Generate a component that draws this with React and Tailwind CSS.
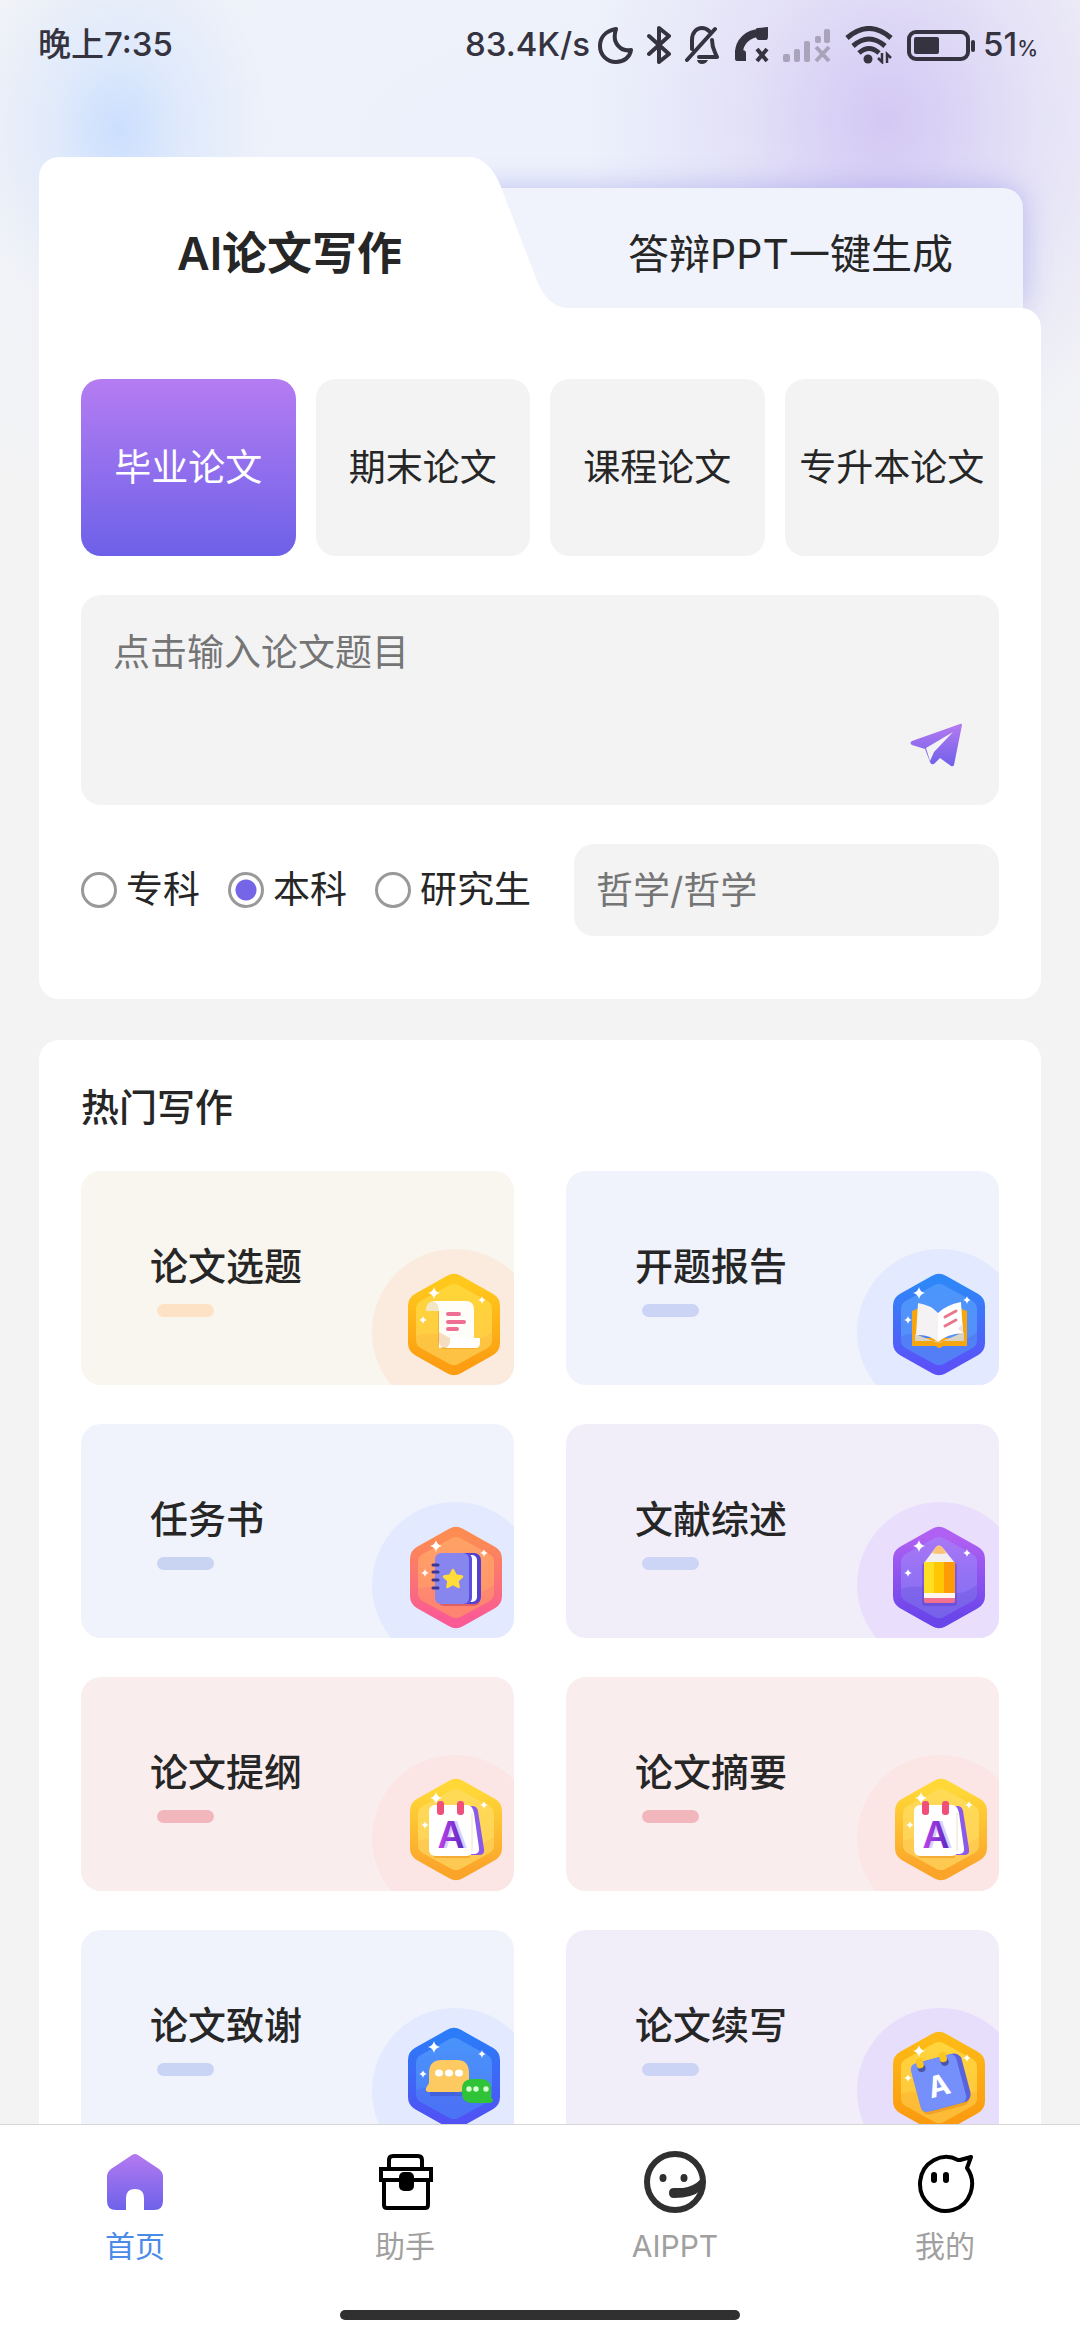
import { useState } from "react";

const paperTypes = ["毕业论文", "期末论文", "课程论文", "专升本论文"];
const degrees = ["专科", "本科", "研究生"];

const HEX_OUTER = "M46 14 78 32V69L46 87 14 69V32Z";
const HEX_INNER = "M46 19 75 35V66L46 82 17 66V35Z";
const SPARK = "M0-6Q1-1 6 0 1 1 0 6-1 1-6 0-1-1 0-6Z";

const Badge = ({ id, outer, inner, wave, dx = 0, dy = 0, children }) => (
  <svg
    className="absolute right-[14px] bottom-[10px] h-[101px] w-[92px] overflow-visible"
    viewBox="0 0 92 101"
    aria-hidden="true"
  >
    <defs>
      <linearGradient id={`${id}-o`} gradientUnits="userSpaceOnUse" x1="0" y1="0" x2="0" y2="101">
        <stop offset="0.1" stopColor={outer[0]} />
        <stop offset="0.9" stopColor={outer[1]} />
      </linearGradient>
      <linearGradient id={`${id}-i`} gradientUnits="userSpaceOnUse" x1="0" y1="10" x2="0" y2="92">
        <stop offset="0" stopColor={inner[0]} />
        <stop offset="1" stopColor={inner[1]} />
      </linearGradient>
    </defs>
    <g transform={`translate(${dx} ${dy})`}>
      <path d={HEX_OUTER} fill={`url(#${id}-o)`} stroke={`url(#${id}-o)`} strokeWidth="28" strokeLinejoin="round" />
      <path d={HEX_INNER} fill={`url(#${id}-i)`} stroke={`url(#${id}-i)`} strokeWidth="18" strokeLinejoin="round" />
      <path
        d="M8 62Q22 56 44 64T84 58V66Q84 71 79 74L50 90Q46 92 42 90L13 74Q8 71 8 66Z"
        fill={wave}
        opacity="0.3"
      />
      <g fill="#fff">
        <path d={SPARK} transform="translate(26 19)" />
        <path d={SPARK} transform="translate(74 26) scale(.65)" />
        <path d={SPARK} transform="translate(15 46) scale(.65)" />
      </g>
      {children}
    </g>
  </svg>
);

const ScrollBadge = () => (
  <Badge id="scroll" outer={["#ffc81c", "#fc9d12"]} inner={["#ffd636", "#ffc94a"]} wave="#f9b13c">
    <path d="M30 30V68Q30 75 37 75H68V72H38Z" fill="#e8951c" opacity="0.5" />
    <path d="M18 37Q18 27 26 27H36V37Z" fill="#f3e6c4" />
    <path d="M25 27H58Q66 27 66 36V66H38Q38 74 31 74V38Q31 29 25 27Z" fill="#fffdf8" />
    <path d="M31 58V66Q31 74 39 74H42V64Z" fill="#f6dcc0" />
    <path d="M42 64H72V69Q72 74 67 74H38Q43 71 42 64Z" fill="#fff" />
    <path d="M40 40H51M40 48H56M40 55H49" stroke="#ee6f92" strokeWidth="4" strokeLinecap="round" />
  </Badge>
);

const BookBadge = () => (
  <Badge id="book" outer={["#2f86f8", "#5a52f8"]} inner={["#4b97fb", "#5a8bf8"]} wave="#4a5ff0">
    <path d="M19 37 26 34V64H66V34L74 37V72H50Q46 76 43 72H19Z" fill="#f7a60f" />
    <path d="M22 60 45 69 71 58V67H50Q46 71 43 67H22Z" fill="#d8d3c4" />
    <path d="M25 29Q38 31 45 39V68Q36 60 23 61Z" fill="#f4f2f2" />
    <path d="M68 28Q53 31 45 39V68Q54 60 70 59Z" fill="#fff" />
    <path d="M52 43 63 37M52 52 63 46" stroke="#e8788a" strokeWidth="3" strokeLinecap="round" />
    <path d="M65 55 70 49V59Z" fill="#e8e4ea" />
  </Badge>
);

const NotebookBadge = () => (
  <Badge id="note" dx={2} outer={["#fd8c52", "#fa5b94"]} inner={["#ffa264", "#ff8f70"]} wave="#fc6a7c">
    <rect x="28" y="28" width="42" height="51" rx="6" fill="#c2385e" opacity="0.5" />
    <rect x="40" y="26" width="31" height="51" rx="7" fill="#5240cf" />
    <rect x="42" y="28" width="25" height="47" rx="5" fill="#fff" />
    <rect x="36" y="26" width="26" height="51" rx="6" fill="#5c4fdd" />
    <rect x="25" y="26" width="34" height="51" rx="6" fill="#8785ee" />
    <path d="M23 38H28M23 45H28M23 53H28M23 61H28" stroke="#3c3696" strokeWidth="3" strokeLinecap="round" />
    <path
      d="m43 43 2.800 5.600 6.200.9-4.500 4.300 1.100 6.200L43 57l-5.600 3 1.100-6.200-4.500-4.300 6.200-.9Z"
      fill="#ffdc38"
      stroke="#ffdc38"
      strokeWidth="2.500"
      strokeLinejoin="round"
    />
  </Badge>
);

const PencilBadge = () => (
  <Badge id="pencil" outer={["#b060f2", "#6a45ea"]} inner={["#a877f6", "#7e6cf2"]} wave="#5f4bd8">
    <rect x="29" y="36" width="35" height="43" rx="3" fill="#5a38c4" opacity="0.4" />
    <path d="M31 36 43 20Q46 17 49 20L62 36Z" fill="#f3efef" />
    <path d="M39 26 43 20Q46 17 49 20L54 26Q46 28 39 26Z" fill="#fbc377" />
    <path d="M31 35H42V67H31Z" fill="#ffdf22" />
    <path d="M41 35H52V67H41Z" fill="#ffc605" />
    <path d="M51 35H62V67H51Z" fill="#ff9b06" />
    <path d="M31 66H62V71H31Z" fill="#fff6ee" />
    <path d="M31 71H62V74Q62 76 60 76H33Q31 76 31 74Z" fill="#f2708f" />
  </Badge>
);

const CalendarBadge = ({ id }) => (
  <Badge id={id} dx={2} dy={-1} outer={["#ffd838", "#fba42a"]} inner={["#ffdb55", "#ffd05a"]} wave="#fbb63e">
    <defs>
      <linearGradient id={`${id}-a`} x1="0" y1="0" x2="1" y2="0">
        <stop offset="0" stopColor="#c043e8" />
        <stop offset="1" stopColor="#5628c4" />
      </linearGradient>
    </defs>
    <path d="M22 70H60V79H26Q22 79 22 70Z" fill="#e8901c" opacity="0.5" />
    <path d="M52 27H62Q67 27 68 32L74 70Q75 76 69 76H58Z" fill="#8a5bea" />
    <path d="M50 28H59Q63 29 64 34L69 69Q70 74 65 75H52Z" fill="#fff" />
    <rect x="19" y="26" width="44" height="51" rx="6" fill="#fff" />
    <path d="M62 34V72" stroke="#f4dfc4" strokeWidth="1" />
    <rect x="27" y="22" width="7" height="14" rx="3" fill="#ef4f78" />
    <rect x="47" y="22" width="7" height="14" rx="3" fill="#ef4f78" />
    <text x="44" y="69" textAnchor="middle" className="font-[Inter] text-[37px] font-semibold" fill="#dccdfa">A</text>
    <text x="41" y="69" textAnchor="middle" className="font-[Inter] text-[37px] font-semibold" fill={`url(#${id}-a)`}>A</text>
  </Badge>
);

const ChatBadge = () => (
  <Badge id="chat" dy={-5} outer={["#2c7bf8", "#5052f4"]} inner={["#4a93fb", "#4c7cf8"]} wave="#4b58ee">
    <path d="M22 64H58V68H22Z" fill="#3445b8" opacity="0.4" />
    <path d="M34 32H49Q61 32 61 45V52Q61 64 50 64H21Q17 64 18 60L21 55V45Q21 32 34 32Z" fill="#fdc961" />
    <g fill="#fff">
      <ellipse cx="31" cy="45" rx="4" ry="3.500" />
      <ellipse cx="41" cy="45" rx="4" ry="3.500" />
      <ellipse cx="51" cy="45" rx="4" ry="3.500" />
    </g>
    <path d="M65 51H73Q83 51 83 61V69L85 72Q85 75 81 75H65Q54 75 54 65V61Q54 51 65 51Z" fill="#2fc437" />
    <g fill="#d9ffd2">
      <circle cx="61" cy="61" r="2.700" />
      <circle cx="68" cy="61" r="2.700" />
      <circle cx="78" cy="61" r="2.700" />
    </g>
  </Badge>
);

const BlueCalendarBadge = () => (
  <Badge id="bluecal" dy={-1} outer={["#fdb916", "#fb9a10"]} inner={["#ffd53c", "#ffc23c"]} wave="#f9a72a">
    <g transform="rotate(-15 46 51)">
      <rect x="22" y="29" width="50" height="50" rx="8" fill="#e08a18" opacity="0.5" />
      <rect x="25" y="26" width="49" height="50" rx="8" fill="#5a62dc" />
      <rect x="22" y="26" width="47" height="50" rx="6" fill="#7590fb" />
      <circle cx="33" cy="32" r="4" fill="#4c55a8" />
      <circle cx="57" cy="32" r="4" fill="#4c55a8" />
      <rect x="29" y="22" width="7" height="10" rx="3" fill="#fcc61e" />
      <rect x="53" y="22" width="7" height="10" rx="3" fill="#fcc61e" />
      <text x="45" y="64" textAnchor="middle" className="font-[Inter] text-[29px] font-bold" fill="#fff">A</text>
    </g>
  </Badge>
);

const hotItems = [
  { title: "论文选题", card: "bg-[#f9f5ef]", glow: "bg-[#faebde]", bar: "bg-[#fde2c6]", icon: <ScrollBadge /> },
  { title: "开题报告", card: "bg-[#f0f3fb]", glow: "bg-[#e3e9fe]", bar: "bg-[#ccd4f5]", icon: <BookBadge /> },
  { title: "任务书", card: "bg-[#f0f3fb]", glow: "bg-[#e3e9fe]", bar: "bg-[#c9d4f2]", icon: <NotebookBadge /> },
  { title: "文献综述", card: "bg-[#f1eef9]", glow: "bg-[#e9dffd]", bar: "bg-[#ccd5f5]", icon: <PencilBadge /> },
  { title: "论文提纲", card: "bg-[#faedee]", glow: "bg-[#fbe5e5]", bar: "bg-[#f2b7bc]", icon: <CalendarBadge id="outline" /> },
  { title: "论文摘要", card: "bg-[#faedee]", glow: "bg-[#fbe5e5]", bar: "bg-[#f2b7bc]", icon: <CalendarBadge id="abstract" /> },
  { title: "论文致谢", card: "bg-[#f0f3fb]", glow: "bg-[#e3e9fe]", bar: "bg-[#c9d4f5]", icon: <ChatBadge /> },
  { title: "论文续写", card: "bg-[#f1eef9]", glow: "bg-[#e7defc]", bar: "bg-[#ccd4f5]", icon: <BlueCalendarBadge /> },
];

const HomeIcon = () => (
  <svg className="size-16" viewBox="0 0 64 64" aria-hidden="true">
    <defs>
      <linearGradient id="home" x1="0" y1="0" x2="0" y2="1">
        <stop offset="0" stopColor="#b57af0" />
        <stop offset="1" stopColor="#6d62ea" />
      </linearGradient>
    </defs>
    <path
      d="M29 5Q32 3 35 5L56 19Q60 22 60 27V51Q60 60 51 60H41V48Q41 39 32 39T23 48V60H13Q4 60 4 51V27Q4 22 8 19Z"
      fill="url(#home)"
    />
  </svg>
);

const ToolboxIcon = () => (
  <svg className="size-16" viewBox="0 0 64 64" fill="none" stroke="#000" strokeWidth="4" aria-hidden="true">
    <path d="M16 18V10Q16 6 20 6H45Q49 6 49 10V18M8 19H58V30H8Z" />
    <path d="M11 30V55Q11 58 14 58H52Q55 58 55 55V30" />
    <rect x="26" y="22" width="15" height="19" rx="5" fill="#000" stroke="none" />
  </svg>
);

const HeadsetIcon = () => (
  <svg className="size-16" viewBox="0 0 64 64" fill="none" stroke="#303030" aria-hidden="true">
    <circle cx="32" cy="32" r="28" strokeWidth="6" />
    <g fill="#303030" stroke="none">
      <ellipse cx="20" cy="28" rx="3.500" ry="4" />
      <ellipse cx="41" cy="28" rx="3.500" ry="4" />
      <path d="M31 38H40Q50 37 58 29V40Q50 48 31 48Q26 48 26 43T31 38Z" />
    </g>
  </svg>
);

const GhostIcon = () => (
  <svg className="size-16" viewBox="0 0 64 64" fill="none" stroke="#000" strokeWidth="4" strokeLinejoin="round" aria-hidden="true">
    <path d="M45 10A26 27 0 1 0 54 18L58 7 47 10Z" fill="#fff" />
    <rect x="18" y="22" width="6" height="11" rx="3" fill="#000" stroke="none" />
    <rect x="30" y="22" width="6" height="11" rx="3" fill="#000" stroke="none" />
  </svg>
);

const navItems = [
  { label: "首页", icon: <HomeIcon />, active: true },
  { label: "助手", icon: <ToolboxIcon /> },
  { label: "AIPPT", icon: <HeadsetIcon /> },
  { label: "我的", icon: <GhostIcon /> },
];

const StatusBar = () => (
  <header className="flex h-[90px] items-center justify-between pr-[42px] pl-[38px] text-[33px] font-medium text-[#35333f]">
    <span>晚上7:35</span>
    <div className="flex items-center gap-[14px]">
      <div className="flex items-center gap-2">
        <span>83.4K/s</span>
        <svg className="h-[38px] w-[35px]" viewBox="0 0 35 38" fill="none" stroke="currentColor" strokeWidth="4" strokeLinejoin="round">
          <path d="M18 3C7 5 2 12 2 20C2 29 9 36 18 36C26 36 32 31 33 24C24 26 13 18 18 3Z" />
        </svg>
      </div>
      <svg className="h-[38px] w-6" viewBox="0 0 24 38" fill="none" stroke="currentColor" strokeWidth="4" strokeLinejoin="round" strokeLinecap="round">
        <path d="M2 10 22 28 12 36V2L22 10 2 28" />
      </svg>
      <svg className="h-[38px] w-[35px]" viewBox="0 0 35 38" fill="none" stroke="currentColor" strokeWidth="4" strokeLinejoin="round" strokeLinecap="round">
        <path d="M30 3 2 34M7 23V14C7 6 12 2 17 2Q21 2 24 5M27 14C27 22 29 24 32 31H14" />
        <path d="M12 34H23Q21 38 17 38T12 34Z" fill="currentColor" stroke="none" />
      </svg>
      <svg className="h-[38px] w-[35px]" viewBox="0 0 35 38" fill="none" stroke="currentColor">
        <path d="M5 27C5 16 14 7 26 7" strokeWidth="8" />
        <path d="M22 3Q22 2 24 2L34 1V10Q34 14 32 14H25Q22 14 22 10ZM1 24H8Q12 24 12 27V35H3Q1 35 1 33Z" fill="currentColor" stroke="none" />
        <path d="m23 23 10 12m0-12L23 35" strokeWidth="4" />
      </svg>
      <svg className="h-[38px] w-12 text-[#aaa3bc]" viewBox="0 0 48 38" fill="currentColor">
        <rect y="28" width="7" height="8" rx="2" />
        <rect x="11" y="23" width="6" height="13" rx="2" />
        <rect x="21" y="15" width="6" height="21" rx="2" />
        <rect x="32" y="10" width="6" height="7" rx="2" />
        <rect x="41" y="3" width="6" height="14" rx="2" />
        <path d="m33 21 13 14m0-14L33 35" stroke="currentColor" strokeWidth="4" />
      </svg>
      <svg className="h-[38px] w-12" viewBox="0 0 48 38" fill="none" stroke="currentColor" strokeWidth="5">
        <path d="M2 12Q24-7 46 12M8 20Q24 6 40 20M14 27Q24 18 34 27" />
        <circle cx="23" cy="33" r="4.500" fill="currentColor" stroke="none" />
        <path d="M37 27V36L33 32M42 37V28L46 32" strokeWidth="2.500" />
      </svg>
      <div className="flex items-center gap-2">
        <svg className="h-[38px] w-[68px]" viewBox="0 0 68 38" fill="none" stroke="currentColor">
          <rect x="2" y="6" width="59" height="27" rx="7" strokeWidth="4" />
          <rect x="7" y="11" width="25" height="17" rx="2" fill="currentColor" stroke="none" />
          <path d="M66 16V24" strokeWidth="4" strokeLinecap="round" />
        </svg>
        <span>
          51<small className="text-[21px]">%</small>
        </span>
      </div>
    </div>
  </header>
);

const WritingPanel = () => {
  const [type, setType] = useState(paperTypes[0]);
  const [degree, setDegree] = useState("本科");
  return (
    <section>
      <div className="relative grid h-[151px] grid-cols-2">
        <div className="absolute top-[31px] right-[18px] bottom-0 left-1/3 rounded-tr-[20px] bg-[#f0f3fb] shadow-[0_0_28px_rgba(120,120,225,0.4)]" />
        <div className="absolute inset-y-0 left-0 w-[43%] rounded-tl-[20px] bg-white" />
        <svg className="absolute top-0 left-[43%] h-full w-[100px]" viewBox="0 0 100 151" fill="#fff" aria-hidden="true">
          <path d="M-2 0H0C14 1 24 12 31 30L66 121C72 138 82 151 100 151H-2Z" />
        </svg>
        <button className="relative pt-[67px] pb-6 text-[45px] leading-[60px] font-semibold">AI论文写作</button>
        <button className="relative pt-[67px] pb-6 text-[41px] leading-[60px]">答辩PPT一键生成</button>
      </div>
      <div className="relative rounded-tr-[20px] rounded-b-[20px] bg-white px-[42px] pt-[71px] pb-[63px]">
        <div className="grid grid-cols-4 gap-5">
          {paperTypes.map((item) => (
            <button
              key={item}
              onClick={() => setType(item)}
              className={
                item === type
                  ? "h-[177px] rounded-[20px] bg-linear-to-b from-[#b57cf2] to-[#6d60e8] text-[37px] whitespace-nowrap text-white"
                  : "h-[177px] rounded-[20px] bg-[#f3f3f3] text-[37px] whitespace-nowrap"
              }
            >
              {item}
            </button>
          ))}
        </div>
        <div className="relative mt-[39px]">
          <textarea
            aria-label="论文题目"
            placeholder="点击输入论文题目"
            className="block h-[210px] w-full resize-none rounded-[20px] bg-[#f3f3f4] px-8 pt-8 text-[37px] leading-[52px] outline-none placeholder:text-[#757575]"
          />
          <button aria-label="发送" className="absolute right-[36px] bottom-[37px]">
            <svg className="h-[46px] w-[54px]" viewBox="0 0 54 46" aria-hidden="true">
              <defs>
                <linearGradient id="send" x1="0" y1="0" x2="0" y2="1">
                  <stop offset="0" stopColor="#b57af0" />
                  <stop offset="1" stopColor="#6f60ea" />
                </linearGradient>
              </defs>
              <path
                d="M51 2Q53 1 53 3L45 43Q44 45 42 44L31 36 25 42Q22 43 21 40L16 27 3 23Q0 21 3 19ZM44 10 17 26 21 39 25 30Z"
                fill="url(#send)"
                fillRule="evenodd"
              />
            </svg>
          </button>
        </div>
        <div className="mt-[39px] flex items-center gap-[43px]">
          <div className="flex gap-7">
            {degrees.map((item) => (
              <label key={item} className="flex items-center gap-[9px] text-[37px] leading-[52px] whitespace-nowrap">
                <input
                  type="radio"
                  name="degree"
                  checked={item === degree}
                  onChange={() => setDegree(item)}
                  className="size-9 appearance-none rounded-full border-[3px] border-[#999] bg-white checked:bg-[radial-gradient(circle,#7566e8_10px,#fff_11px)]"
                />
                {item}
              </label>
            ))}
          </div>
          <input
            type="text"
            aria-label="专业"
            placeholder="哲学/哲学"
            className="h-[92px] min-w-0 flex-1 rounded-[20px] bg-[#f3f3f3] px-[22px] text-[37px] outline-none placeholder:text-[#757575]"
          />
        </div>
      </div>
    </section>
  );
};

const HotPanel = () => (
  <section className="mt-[41px] rounded-[20px] bg-white px-[42px] pt-[41px] pb-10">
    <h2 className="text-[38px] leading-[52px] font-medium">热门写作</h2>
    <div className="mt-[38px] grid grid-cols-2 gap-x-[52px] gap-y-[39px]">
      {hotItems.map(({ title, card, glow, bar, icon }) => (
        <a
          key={title}
          href="#"
          className={`relative block h-[214px] overflow-hidden rounded-[20px] pt-[69px] pl-[69px] ${card}`}
        >
          <div className={`absolute -right-6 -bottom-[30px] size-[166px] rounded-full ${glow}`} />
          <h3 className="text-[38px] leading-[52px] font-medium">{title}</h3>
          <div className={`mt-3 ml-[7px] h-[13px] w-[57px] rounded-full ${bar}`} />
          {icon}
        </a>
      ))}
    </div>
  </section>
);

const NavBar = () => (
  <nav className="border-t border-[#d6d6d6] bg-white pb-5">
    <div className="grid grid-cols-4 pt-[25px]">
      {navItems.map(({ label, icon, active }) => (
        <a
          key={label}
          href="#"
          className={`flex flex-col items-center gap-3 text-[30px] leading-10 ${active ? "text-[#4a8be8]" : "text-[#a0a0a0]"}`}
        >
          {icon}
          {label}
        </a>
      ))}
    </div>
    <div className="mx-auto mt-11 h-[10px] w-[400px] rounded-full bg-[#303030]" />
  </nav>
);

const App = () => {
  return (
    <div className="flex h-screen flex-col bg-[#f3f3f4] bg-[radial-gradient(150px_190px_at_11%_130px,#cbdffe,rgba(203,223,254,0.4)_45%,transparent),radial-gradient(300px_340px_at_82%_120px,#d3c8f4,rgba(213,202,244,0.4)_50%,transparent),radial-gradient(760px_480px_at_50%_150px,#ecf1fc,rgba(236,241,252,0.6)_60%,transparent)] [font-family:Inter,'Noto_Sans_CJK_SC',sans-serif] text-[#262626]">
      <StatusBar />
      <main className="min-h-0 flex-1 overflow-y-auto px-[39px] pt-[67px] [scrollbar-width:none]">
        <WritingPanel />
        <HotPanel />
      </main>
      <NavBar />
    </div>
  );
};

export default App;
